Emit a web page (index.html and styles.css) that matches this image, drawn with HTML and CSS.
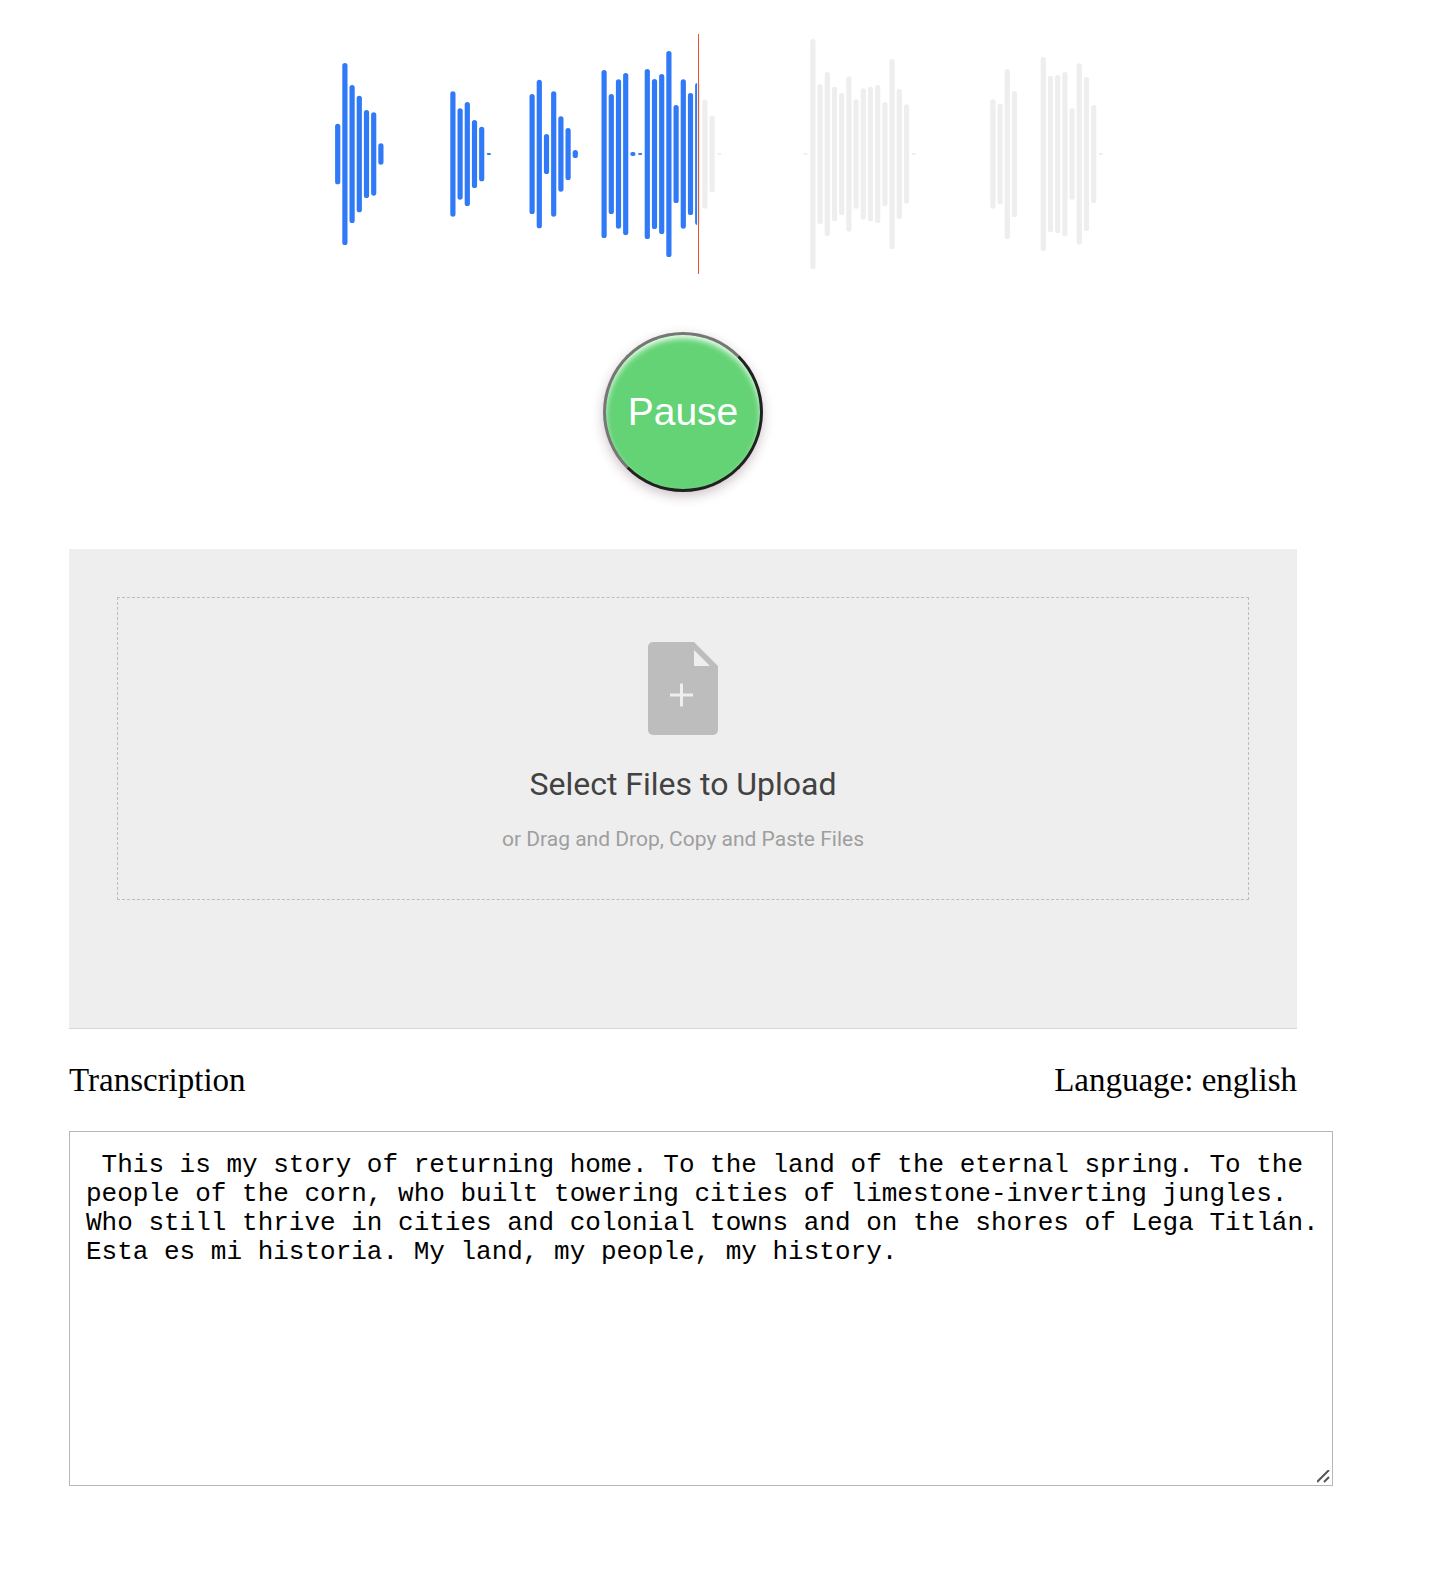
FILE: index.html
```
<!DOCTYPE html>
<html lang="en">
<head>
<meta charset="utf-8">
<title>Transcription</title>
<link rel="stylesheet" href="styles.css">
</head>
<body>
<main class="page">
  <svg class="waveform" viewBox="0 0 1228 240" role="img" aria-label="Audio waveform">
    <defs>
      <clipPath id="played"><rect x="0" y="0" width="628" height="240"/></clipPath>
    </defs>
    <g class="wave-rest" id="wave-rest"></g>
    <g class="wave-played" id="wave-played" clip-path="url(#played)"></g>
    <rect class="wave-cursor" x="629" y="0" width="1" height="240"/>
  </svg>

  <button class="play-button" type="button">Pause</button>

  <section class="upload">
    <label class="dropzone">
      <input class="file-input" type="file" multiple>
      <svg class="file-icon" viewBox="0 0 70 93" aria-hidden="true">
        <path fill="#bdbdbd" d="M5 0H46L70 24V88a5 5 0 0 1-5 5H5a5 5 0 0 1-5-5V5a5 5 0 0 1 5-5z"/>
        <path fill="#eee" d="M46 8V24H62z"/>
        <path fill="#eee" d="M32 41.500h3v10h10v3h-10v10h-3v-10h-10v-3h10z"/>
      </svg>
      <span class="dropzone-title">Select Files to Upload</span>
      <span class="dropzone-hint">or Drag and Drop, Copy and Paste Files</span>
    </label>
  </section>

  <div class="result-head">
    <label for="transcription">Transcription</label>
    <span>Language: english</span>
  </div>
  <textarea class="transcription" id="transcription" rows="11" spellcheck="false"> This is my story of returning home. To the land of the eternal spring. To the people of the corn, who built towering cities of limestone-inverting jungles. Who still thrive in cities and colonial towns and on the shores of Lega Titlán. Esta es mi historia. My land, my people, my history.</textarea>
</main>
<script src="waveform.js"></script>
</body>
</html>
```
FILE: styles.css
```
body {
  margin: 0;
  background: #fff;
  color: #000;
  font-family: "Liberation Serif", "Times New Roman", serif;
}

.page {
  display: flex;
  flex-direction: column;
  align-items: center;
  margin: 0 145px 0 69px;
  padding: 34px 0 96px;
}

.waveform {
  display: block;
  width: 100%;
}

.wave-rest {
  fill: #eee;
}

.wave-played {
  fill: #307af7;
}

.wave-cursor {
  fill: #e8542c;
}

.play-button {
  box-sizing: border-box;
  width: 160px;
  height: 160px;
  margin: 58px 0 57px;
  padding: 0;
  border: 3px solid;
  border-color: #767676 #212121 #212121 #767676;
  border-radius: 50%;
  background: #63d375;
  box-shadow: inset 0 4px 6px -1px #fff, 0 4px 12px rgba(60, 20, 30, 0.25);
  color: #fff;
  font: 39px "Liberation Sans", Arial, sans-serif;
}

.upload {
  box-sizing: border-box;
  width: 100%;
  padding: 48px 48px 128px;
  border-bottom: 1px solid #d6d6d6;
  background: #eee;
  font-family: Roboto, sans-serif;
}

.dropzone {
  position: relative;
  display: flex;
  flex-direction: column;
  align-items: center;
  padding: 44px 16px 48px;
  border: 1px dashed #bdbdbd;
  cursor: pointer;
}

.file-input {
  position: absolute;
  width: 1px;
  height: 1px;
  opacity: 0;
}

.file-icon {
  width: 70px;
  height: 93px;
}

.dropzone-title {
  margin-top: 29px;
  color: #424242;
  font-size: 32px;
  line-height: 40px;
}

.dropzone-hint {
  margin-top: 23px;
  color: #9e9e9e;
  font-size: 21px;
  line-height: 24px;
}

.result-head {
  display: flex;
  justify-content: space-between;
  width: 100%;
  margin: 32px 0;
  font-size: 33px;
  line-height: 38px;
}

.transcription {
  box-sizing: border-box;
  align-self: flex-start;
  width: calc(100% + 36px);
  margin: 0;
  padding: 19px 12px 15px 16px;
  border: 1px solid #b1b8be;
  border-radius: 0;
  background: #fff;
  color: #000;
  font: 26px/29px "Liberation Mono", "Courier New", monospace;
  resize: both;
}

.transcription::-webkit-resizer {
  background: url("data:image/svg+xml,%3Csvg xmlns='http://www.w3.org/2000/svg' width='15' height='15'%3E%3Cpath d='M0 12L12 0M7 12L12 7' stroke='%23555' stroke-width='2'/%3E%3C/svg%3E") no-repeat;
}
```
FILE: waveform.js
```
// Half heights of the bars, keyed by the index of the first bar in each burst.
const bursts = {
  0: [30.3, 91, 69, 58.3, 44, 41.7, 10.7],
  16: [62.7, 45.7, 52, 34, 27.3, 1],
  27: [60, 74.3, 20, 62.7, 37.7, 26, 4],
  37: [84, 60, 74.7, 81, 2, 1, 85, 75, 80, 103, 49, 74.7, 61, 71, 54.5, 38.3, 1],
  65: [1, 115, 70, 82, 67.3, 61, 77.7, 54.7, 65.7, 67.3, 69, 52, 95, 65, 49.7, 1],
  91: [54.7, 50.3, 85, 63],
  98: [97, 78.3, 79, 82, 45.7, 90.7, 77, 49, 1]
};
const step = 7.2;
const start = 266.1;
const middle = 120;
const lastPlayed = 50;

function drawBar(group, index, half) {
  const width = half > 1 ? 5.2 : 4;
  const bar = document.createElementNS("http://www.w3.org/2000/svg", "rect");
  bar.setAttribute("x", start + index * step + (5.2 - width) / 2);
  bar.setAttribute("y", middle - half);
  bar.setAttribute("width", width);
  bar.setAttribute("height", half * 2);
  bar.setAttribute("rx", Math.min(2.6, half));
  group.appendChild(bar);
}

const rest = document.getElementById("wave-rest");
const played = document.getElementById("wave-played");
for (const [first, halves] of Object.entries(bursts)) {
  halves.forEach((half, i) => {
    const index = Number(first) + i;
    if (index >= lastPlayed) drawBar(rest, index, half);
    if (index <= lastPlayed) drawBar(played, index, half);
  });
}
```
